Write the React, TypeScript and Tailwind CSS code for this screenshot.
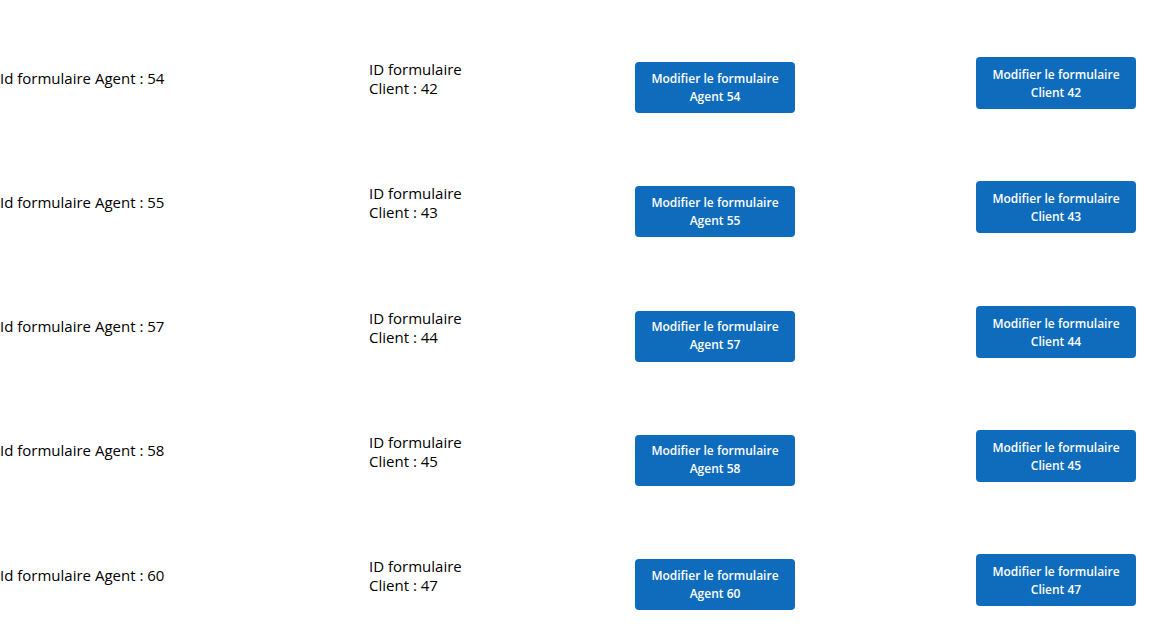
const rows = [
  { agent: 54, client: 42 },
  { agent: 55, client: 43 },
  { agent: 57, client: 44 },
  { agent: 58, client: 45 },
  { agent: 60, client: 47 },
];

export default function App() {
  return (
    <div className="w-[1174px] h-[632px] bg-white text-black pt-[16px] font-['Open_Sans',sans-serif] overflow-hidden">
      {rows.map((r) => (
        <div key={r.agent} className="flex items-center h-[124.25px]">
          <div className="w-[369px] text-[15px] leading-[19px]">Id formulaire Agent : {r.agent}</div>
          <div className="w-[266px] text-[15px] leading-[19px] mt-[2px]">
            ID formulaire
            <br />
            Client : {r.client}
          </div>
          <div className="w-[341px] mt-[19px]">
            <button className="w-[160px] h-[51px] rounded bg-[#0f6cbd] text-white text-[12px] font-semibold leading-[18px]">
              Modifier le formulaire
              <br />
              Agent {r.agent}
            </button>
          </div>
          <div className="w-[160px] mt-[10px]">
            <button className="w-[160px] h-[52px] rounded bg-[#0f6cbd] text-white text-[12px] font-semibold leading-[18px] pt-[2px]">
              Modifier le formulaire
              <br />
              Client {r.client}
            </button>
          </div>
        </div>
      ))}
    </div>
  );
}
